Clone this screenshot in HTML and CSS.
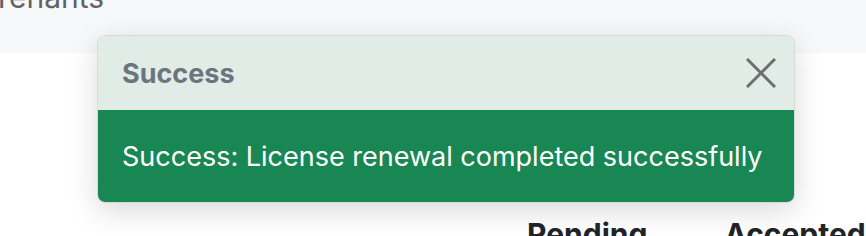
FILE: index.html
```html
<!DOCTYPE html>
<html lang="en">
<head>
    <meta charset="UTF-8">
    <meta name="viewport" content="width=device-width, initial-scale=1.0">
    <title>Tenants</title>
    <link rel="stylesheet" href="styles.css">
</head>
<body>
    <div class="page-header">
        <h1>Tenants</h1>
    </div>
    <div class="content">
        <div class="table-head">
            <span class="col-pending">Pending</span>
            <span class="col-accepted">Accepted</span>
        </div>
    </div>

    <div class="toast">
        <div class="toast-header">
            <strong>Success</strong>
            <button class="btn-close" aria-label="Close">
                <svg width="30" height="30" viewBox="0 0 30 30">
                    <path d="M1 1 L29 29 M29 1 L1 29" stroke="#6b6f73" stroke-width="3" fill="none"/>
                </svg>
            </button>
        </div>
        <div class="toast-body">Success: License renewal completed successfully</div>
    </div>
</body>
</html>
```

FILE: styles.css
```css
body {
    margin: 0;
    font-family: Inter, "Liberation Sans", sans-serif;
    background: #fff;
    color: #212529;
    overflow: hidden;
    height: 236px;
}

.page-header {
    background-color: #f7f8fa;
    height: 53px;
    overflow: hidden;
}

.page-header h1 {
    margin: -21px 0 0 -8px;
    font-size: 30px;
    line-height: 36px;
    font-weight: 400;
    color: #5f6368;
}

.content {
    padding-top: 163px;
}

.table-head {
    display: flex;
    padding-left: 527px;
    gap: 77px;
    font-size: 30px;
    line-height: 36px;
    font-weight: 700;
}

/* toast overlay */
.toast {
    position: absolute;
    top: 35px;
    left: 97px;
    width: 698px;
    border: 1px solid #d5dbd8;
    border-radius: 8px;
    overflow: hidden;
    box-shadow: 0 8px 30px rgba(0, 0, 0, 0.15);
    box-sizing: border-box;
}

.toast-header {
    display: flex;
    align-items: center;
    justify-content: space-between;
    height: 74px;
    padding: 0 18px 0 24px;
    background-color: #e1ece6;
    color: #6c757d;
    font-size: 27px;
}

.btn-close {
    background: none;
    border: none;
    padding: 0;
    width: 30px;
    height: 30px;
    cursor: pointer;
}

.toast-body {
    background-color: #198754;
    color: #fff;
    height: 92px;
    display: flex;
    align-items: center;
    padding-left: 24px;
    font-size: 27px;
}
```
